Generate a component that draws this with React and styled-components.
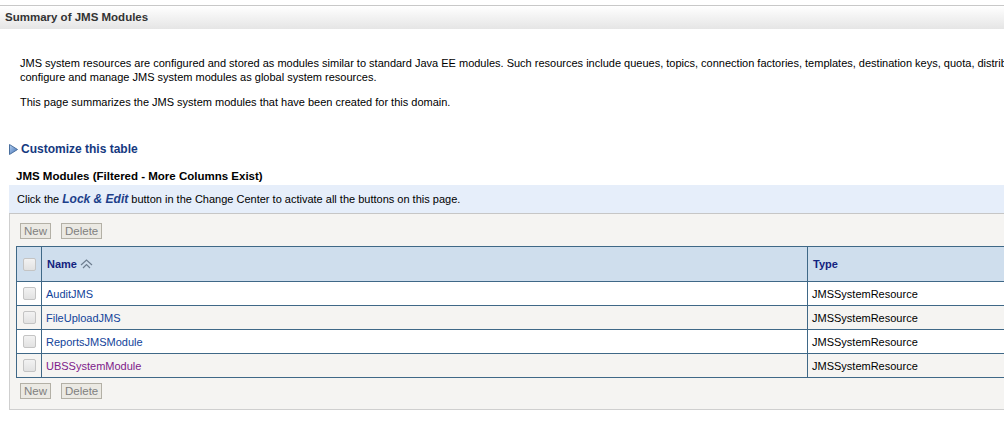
import React from 'react';
import styled, { createGlobalStyle } from 'styled-components';

const GlobalStyle = createGlobalStyle`
  html, body {
    margin: 0;
    padding: 0;
    background: #fff;
  }
  body {
    font-family: Tahoma, "Liberation Sans", Arial, sans-serif;
    font-size: 11px;
    color: #000;
    overflow: hidden;
  }
`;

const Page = styled.div`
  width: 1004px;
  height: 430px;
  overflow: hidden;
  padding-top: 5px;
  box-sizing: border-box;
`;

const TitleBar = styled.div`
  height: 23px;
  border-top: 1px solid #c8c8c8;
  background: linear-gradient(#ffffff, #e5e5e5);
  padding-left: 5px;
  line-height: 23px;
  font-weight: bold;
  font-size: 11.5px;
  color: #333;
`;

const Intro = styled.div`
  padding: 27px 20px 0 20px;
  white-space: nowrap;

  p {
    margin: 0 0 11px 0;
    line-height: 14px;
  }
`;

const CustomizeLink = styled.a`
  display: flex;
  align-items: center;
  gap: 3px;
  margin: 32px 0 0 9px;
  font-weight: bold;
  font-size: 12px;
  color: #15397f;
  text-decoration: none;
  height: 16px;
`;

const Section = styled.div`
  margin: 10px 0 0 9px;
`;

const SectionTitle = styled.div`
  padding-left: 7px;
  font-weight: bold;
  font-size: 11.5px;
  height: 18px;
  line-height: 18px;
`;

const InfoBar = styled.div`
  height: 28px;
  line-height: 28px;
  background: #e6eefa;
  border-bottom: 1px solid #c6c6c6;
  padding-left: 8px;
  white-space: nowrap;

  b {
    font-style: italic;
    color: #1d3f8a;
    font-size: 12px;
  }
`;

const Panel = styled.div`
  background: #f5f4f2;
  border-left: 1px solid #cfcfcf;
  border-bottom: 1px solid #cfcfcf;
  padding: 9px 0 10px 0;
`;

const ButtonRow = styled.div`
  display: flex;
  gap: 10px;
  padding-left: 10px;
  margin: ${p => (p.bottom ? '5px 0 0 0' : '0 0 7px 0')};
`;

const Button = styled.button`
  font-family: "Liberation Sans", Arial, sans-serif;
  font-size: 11.5px;
  color: #808080;
  background: #ebe9e3;
  border: 1px solid #b3b0a6;
  height: 16px;
  padding: 0 3px;
  line-height: 14px;
  border-radius: 0;
`;

const Table = styled.table`
  margin-left: 6px;
  width: 1100px;
  border-collapse: collapse;
  border: 1px solid #3f6887;
`;

const HeadCell = styled.th`
  height: 34px;
  background: #cfdeed;
  padding: 0 0 0 ${p => (p.check ? '0' : '5px')};
  width: ${p => p.w || 'auto'};
  border: 1px solid #3f6887;
  font-size: 11px;
  color: #13237f;
  text-align: ${p => (p.check ? 'center' : 'left')};

  span {
    display: inline-flex;
    align-items: center;
    gap: 3px;
  }
`;

const Row = styled.tr`
  background: ${p => (p.alt ? '#f5f4f2' : '#ffffff')};
`;

const Cell = styled.td`
  height: 23px;
  padding: 0 0 0 ${p => (p.check ? '0' : '4px')};
  border: 1px solid #3f6887;
  text-align: ${p => (p.check ? 'center' : 'left')};
  white-space: nowrap;
`;

const NameLink = styled.a`
  color: ${p => (p.visited ? '#7d1a8a' : '#12439a')};
  text-decoration: none;
`;

const Check = styled.span`
  display: inline-block;
  width: 11px;
  height: 11px;
  border: 1px solid #c4c4c4;
  border-radius: 2px;
  background: linear-gradient(#f2f2f2, #e2e2e2);
  vertical-align: middle;
`;

const Triangle = () => (
  <svg width="9" height="11" viewBox="0 0 9 11">
    <defs>
      <linearGradient id="tg" x1="0" y1="0" x2="1" y2="1">
        <stop offset="0" stopColor="#b9d3f0" />
        <stop offset="1" stopColor="#3a6bb5" />
      </linearGradient>
    </defs>
    <path d="M0.5 0.5 L8.5 5.5 L0.5 10.5 Z" fill="url(#tg)" stroke="#4a6f9e" strokeWidth="1" />
  </svg>
);

const SortIcon = () => (
  <svg width="13" height="10" viewBox="0 0 13 10">
    <path d="M1 6 L6.5 1 L12 6" fill="none" stroke="#6d7d8f" strokeWidth="1.2" />
    <path d="M3 9 L6.5 5.5 L10 9" fill="none" stroke="#6d7d8f" strokeWidth="1.2" />
  </svg>
);

const modules = [
  { name: 'AuditJMS', type: 'JMSSystemResource' },
  { name: 'FileUploadJMS', type: 'JMSSystemResource' },
  { name: 'ReportsJMSModule', type: 'JMSSystemResource' },
  { name: 'UBSSystemModule', type: 'JMSSystemResource', visited: true },
];

export default function App() {
  return (
    <Page>
      <GlobalStyle />
      <TitleBar>Summary of JMS Modules</TitleBar>
      <Intro>
        <p>
          JMS system resources are configured and stored as modules similar to standard Java EE modules. Such resources include queues, topics, connection factories, templates, destination keys, quota, distributed queues, distributed topics, foreign servers, and JMS store-and-forward (SAF) parameters. You can administratively
          <br />
          configure and manage JMS system modules as global system resources.
        </p>
        <p>This page summarizes the JMS system modules that have been created for this domain.</p>
      </Intro>
      <CustomizeLink href="#">
        <Triangle />
        Customize this table
      </CustomizeLink>
      <Section>
        <SectionTitle>JMS Modules (Filtered - More Columns Exist)</SectionTitle>
        <InfoBar>
          Click the <b>Lock &amp; Edit</b> button in the Change Center to activate all the buttons on this page.
        </InfoBar>
        <Panel>
          <ButtonRow>
            <Button disabled>New</Button>
            <Button disabled>Delete</Button>
          </ButtonRow>
          <Table>
            <thead>
              <tr>
                <HeadCell check w="24px"><Check /></HeadCell>
                <HeadCell w="760px">
                  <span>Name <SortIcon /></span>
                </HeadCell>
                <HeadCell>Type</HeadCell>
              </tr>
            </thead>
            <tbody>
              {modules.map((m, i) => (
                <Row key={m.name} alt={i % 2 === 1}>
                  <Cell check><Check /></Cell>
                  <Cell><NameLink href="#" visited={m.visited}>{m.name}</NameLink></Cell>
                  <Cell>{m.type}</Cell>
                </Row>
              ))}
            </tbody>
          </Table>
          <ButtonRow bottom>
            <Button disabled>New</Button>
            <Button disabled>Delete</Button>
          </ButtonRow>
        </Panel>
      </Section>
    </Page>
  );
}
